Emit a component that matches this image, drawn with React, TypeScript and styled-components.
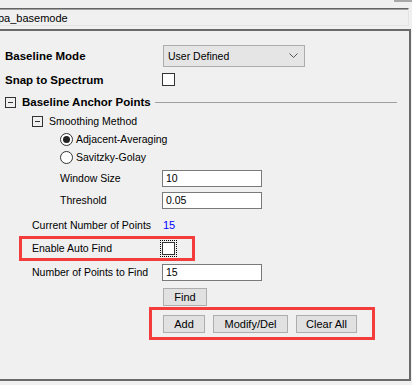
import React from "react";
import styled, { createGlobalStyle } from "styled-components";

const GlobalStyle = createGlobalStyle`
  html, body {
    margin: 0;
    padding: 0;
    background: #f0f0f0;
    overflow: hidden;
  }
  body {
    font-family: "Liberation Sans", Arial, sans-serif;
    font-size: 10.5px;
    color: #000;
  }
`;

const Page = styled.div`
  width: 412px;
  height: 385px;
  background: #f0f0f0;
  display: flex;
  flex-direction: column;
  overflow: hidden;
`;

const TopStrip = styled.div`
  height: 8px;
  display: flex;
  justify-content: flex-end;
`;

const ScrollStub = styled.div`
  width: 18px;
  height: 2px;
  background: #a8a8a8;
`;

const NameBar = styled.div`
  height: 18px;
  width: 409px;
  box-sizing: border-box;
  border-top: 1px solid #646464;
  border-right: 1px solid #e3e3e3;
  border-bottom: 1px solid #e3e3e3;
  box-shadow: inset 0 1px 0 #a0a0a0;
  display: flex;
  align-items: center;
  font-size: 11px;
  white-space: nowrap;
  overflow: hidden;
`;

const NameText = styled.span`
  margin-left: -2px;
  padding-top: 1px;
`;

const Panel = styled.div`
  margin-top: 3px;
  margin-left: -2px;
  width: 413px;
  height: 352px;
  box-sizing: border-box;
  border: 2px solid #6a6a6a;
  padding-top: 14px;
  display: flex;
  flex-direction: column;
`;

const Row = styled.div<{ $h: number }>`
  position: relative;
  height: ${(p) => p.$h}px;
  display: grid;
  grid-template-columns: 162px 1fr;
  align-items: center;
`;

const Label = styled.div<{ $indent: number; $bold?: boolean }>`
  padding-left: ${(p) => p.$indent}px;
  font-weight: ${(p) => (p.$bold ? 700 : 400)};
  font-size: ${(p) => (p.$bold ? "11.5px" : "10.5px")};
  white-space: nowrap;
`;

const Select = styled.div`
  margin-left: 1px;
  width: 142px;
  height: 22px;
  box-sizing: border-box;
  background: #e5e5e5;
  border: 1px solid #acacac;
  display: flex;
  align-items: center;
  justify-content: space-between;
  padding: 0 6px 0 4px;
  font-size: 10.5px;
`;

const CheckBox = styled.div<{ $focus?: boolean }>`
  width: 13px;
  height: 13px;
  box-sizing: border-box;
  border: 1px solid #333;
  background: #fff;
  outline: ${(p) => (p.$focus ? "1px dotted #000" : "none")};
  outline-offset: 1px;
`;

const TextBox = styled.div`
  width: 100px;
  height: 17px;
  box-sizing: border-box;
  background: #fff;
  border: 1px solid #7a7a7a;
  padding-left: 3px;
  display: flex;
  align-items: center;
  font-size: 10.5px;
`;

const Value = styled.span`
  margin-left: 1px;
  color: #0000ff;
  font-size: 11px;
`;

const SectionRow = styled.div<{ $h: number; $indent: number }>`
  height: ${(p) => p.$h}px;
  display: flex;
  align-items: center;
  padding-left: ${(p) => p.$indent}px;
  white-space: nowrap;
`;

const Collapse = styled.span`
  width: 11px;
  height: 11px;
  box-sizing: border-box;
  border: 1px solid #333;
  position: relative;
  flex: none;
  margin-right: 6px;
  &::after {
    content: "";
    position: absolute;
    left: 2px;
    right: 2px;
    top: 4px;
    height: 1px;
    background: #333;
  }
`;

const SectionTitle = styled.span<{ $bold?: boolean }>`
  font-weight: ${(p) => (p.$bold ? 700 : 400)};
  font-size: ${(p) => (p.$bold ? "11.5px" : "10.5px")};
`;

const Rule = styled.span`
  flex: 1;
  height: 1px;
  background: #a0a0a0;
  margin: 0 12px 0 4px;
`;

const RadioText = styled.span`
  margin-left: 3px;
  font-size: 10.5px;
`;

const ButtonRow = styled.div<{ $h: number; $top?: number }>`
  position: relative;
  height: ${(p) => p.$h}px;
  margin-top: ${(p) => p.$top ?? 0}px;
  display: flex;
  gap: 8px;
  padding-left: 163px;
`;

const Button = styled.div<{ $w: number }>`
  width: ${(p) => p.$w}px;
  height: 100%;
  box-sizing: border-box;
  background: #e1e1e1;
  border: 1px solid #adadad;
  display: flex;
  align-items: center;
  justify-content: center;
  font-size: 11px;
`;

const Highlight = styled.div<{ $l: number; $t: number; $w: number; $h: number }>`
  position: absolute;
  left: ${(p) => p.$l}px;
  top: ${(p) => p.$t}px;
  width: ${(p) => p.$w}px;
  height: ${(p) => p.$h}px;
  box-sizing: border-box;
  border: 3px solid #f33c3c;
  pointer-events: none;
`;

const Chevron = () => (
  <svg width="9" height="6" viewBox="0 0 9 6">
    <path d="M0.5 0.5 L4.5 4.5 L8.5 0.5" fill="none" stroke="#555" strokeWidth="1" />
  </svg>
);

const Radio = ({ checked }: { checked?: boolean }) => (
  <svg width="13" height="13" viewBox="0 0 13 13">
    <circle cx="6.5" cy="6.5" r="6" fill="#fff" stroke="#333" strokeWidth="1" />
    {checked && <circle cx="6.5" cy="6.5" r="3.5" fill="#222" />}
  </svg>
);

export default function App() {
  return (
    <>
      <GlobalStyle />
      <Page>
        <TopStrip>
          <ScrollStub />
        </TopStrip>
        <NameBar>
          <NameText>pa_basemode</NameText>
        </NameBar>
        <Panel>
          <Row $h={22}>
            <Label $indent={5} $bold>Baseline Mode</Label>
            <Select>
              <span>User Defined</span>
              <Chevron />
            </Select>
          </Row>
          <Row $h={25}>
            <Label $indent={5} $bold>Snap to Spectrum</Label>
            <CheckBox />
          </Row>
          <SectionRow $h={20} $indent={5}>
            <Collapse />
            <SectionTitle $bold>Baseline Anchor Points</SectionTitle>
            <Rule />
          </SectionRow>
          <SectionRow $h={18} $indent={32}>
            <Collapse />
            <SectionTitle>Smoothing Method</SectionTitle>
          </SectionRow>
          <SectionRow $h={18} $indent={60}>
            <Radio checked />
            <RadioText>Adjacent-Averaging</RadioText>
          </SectionRow>
          <SectionRow $h={18} $indent={60}>
            <Radio />
            <RadioText>Savitzky-Golay</RadioText>
          </SectionRow>
          <Row $h={24}>
            <Label $indent={60}>Window Size</Label>
            <TextBox>10</TextBox>
          </Row>
          <Row $h={20}>
            <Label $indent={60}>Threshold</Label>
            <TextBox>0.05</TextBox>
          </Row>
          <Row $h={30}>
            <Label $indent={32}>Current Number of Points</Label>
            <Value>15</Value>
          </Row>
          <Row $h={16}>
            <Label $indent={32}>Enable Auto Find</Label>
            <CheckBox $focus />
            <Highlight $l={19} $t={-4} $w={176} $h={25} />
          </Row>
          <Row $h={32}>
            <Label $indent={32}>Number of Points to Find</Label>
            <TextBox>15</TextBox>
          </Row>
          <ButtonRow $h={18}>
            <Button $w={44}>Find</Button>
          </ButtonRow>
          <ButtonRow $h={18} $top={9}>
            <Button $w={42}>Add</Button>
            <Button $w={75}>Modify/Del</Button>
            <Button $w={61}>Clear All</Button>
            <Highlight $l={149} $t={-8} $w={226} $h={33} />
          </ButtonRow>
        </Panel>
      </Page>
    </>
  );
}
